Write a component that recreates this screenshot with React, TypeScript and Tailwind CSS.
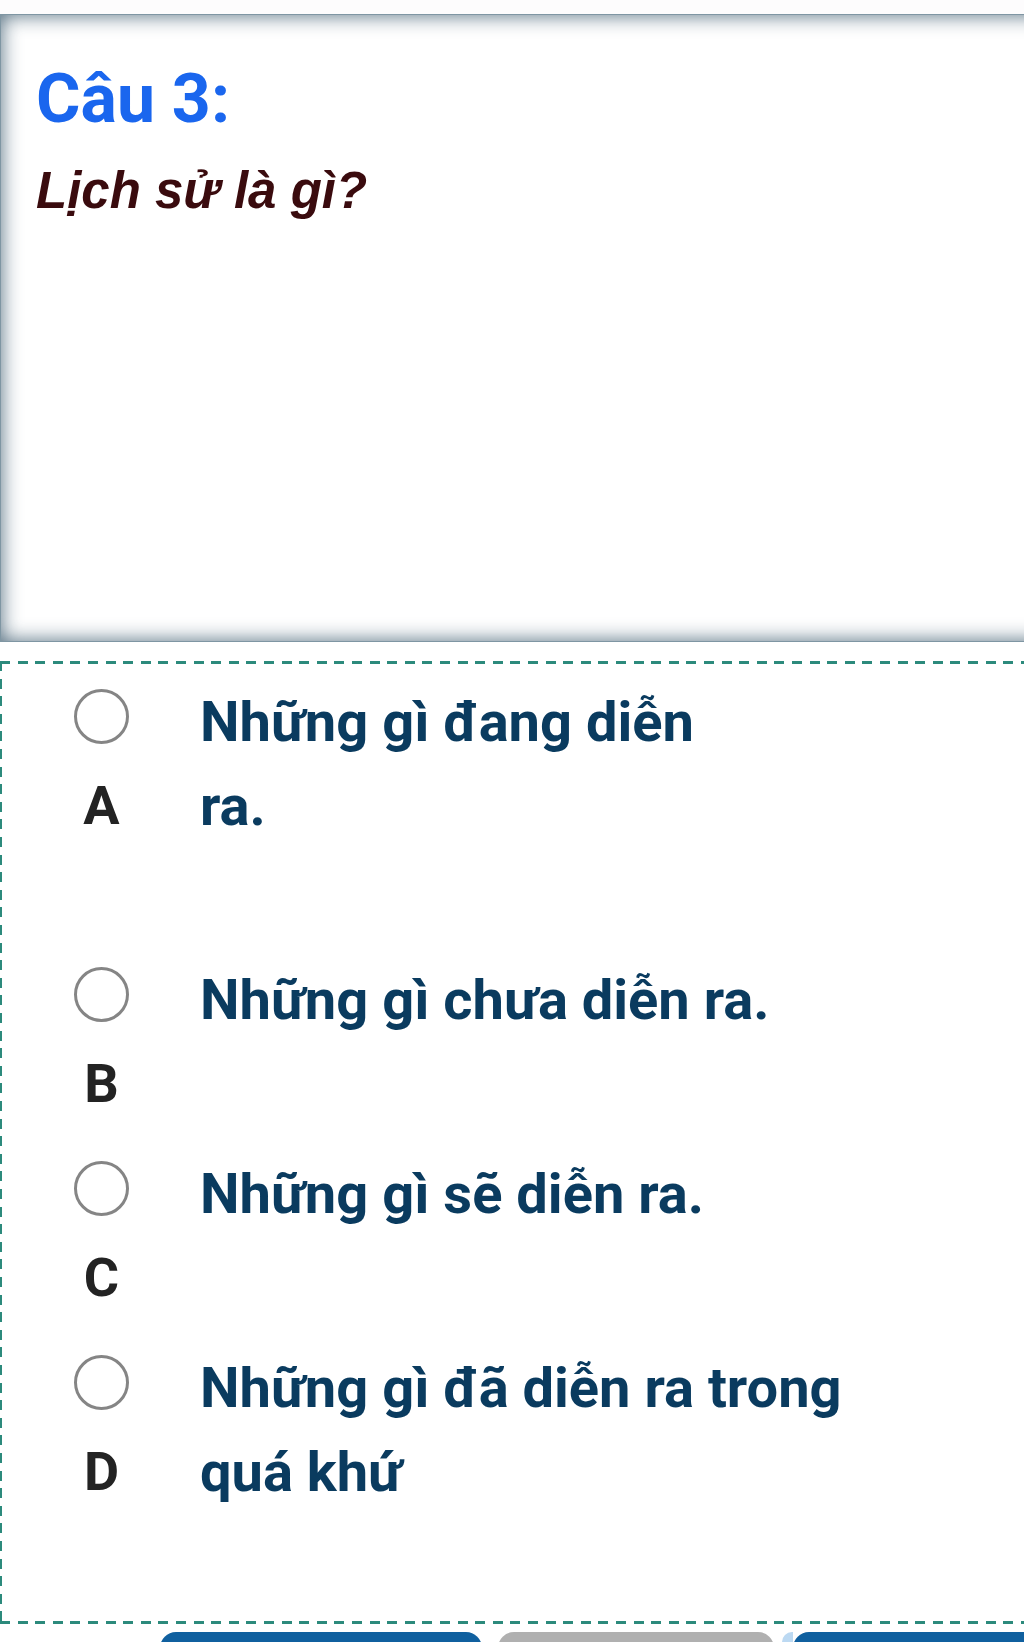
import React from "react";

const font = { fontFamily: "Roboto, 'Noto Sans', Arial, sans-serif" };

function Radio() {
  return (
    <div className="h-[84px] flex items-center justify-center pb-[12px]">
      <div className="w-[55px] h-[55px] rounded-full border-[3px] border-[#858585] bg-white" />
    </div>
  );
}

function Option({ letter, lines, extra }: { letter: string; lines: string[]; extra?: boolean }) {
  return (
    <div className="flex">
      <div className="w-[197px] flex flex-col">
        <Radio />
        <div className="h-[84px] leading-[84px] text-center text-[54px] font-bold text-[#232323]">{letter}</div>
      </div>
      <div className="flex flex-col text-[56px] font-bold leading-[84px] text-[#0a3b5f] whitespace-nowrap">
        {lines.map((l, i) => (
          <div key={i} className="h-[84px]">{l}</div>
        ))}
        {extra ? <div className="h-[84px]" /> : null}
      </div>
    </div>
  );
}

export default function App() {
  return (
    <div className="w-[1024px] h-[1642px] overflow-hidden bg-white relative" style={font}>
      <div className="h-[14px] bg-[#fdfcfd]" />
      <div className="w-[1100px] h-[628px] border border-[#7f96a3] bg-white shadow-[inset_0_0_20px_rgba(60,90,110,0.9)] pl-[35px] pt-[49px]">
        <div className="text-[68px] leading-[70px] font-bold text-[#1a66ee]">Câu 3:</div>
        <div className="mt-[32px] text-[51px] leading-[50px] font-bold italic text-[#3a0b0e] font-['Liberation_Sans',Arial,sans-serif]">Lịch sử là gì?</div>
      </div>
      <div className="h-[19px]" />
      <div className="w-[1100px] h-[963px] pt-[19px] pl-[3px] flex flex-col gap-[26px] bg-no-repeat bg-[image:repeating-linear-gradient(90deg,#2c8a7c_0_10px,transparent_10px_17.6px),repeating-linear-gradient(90deg,#2c8a7c_0_10px,transparent_10px_17.6px),repeating-linear-gradient(180deg,#2c8a7c_0_10px,transparent_10px_17.6px)] bg-[length:100%_3px,100%_3px,2px_100%] bg-[position:0_0,0_100%,0_0]">
        <Option letter="A" lines={["Những gì đang diễn", "ra."]} extra />
        <Option letter="B" lines={["Những gì chưa diễn ra."]} />
        <Option letter="C" lines={["Những gì sẽ diễn ra."]} />
        <Option letter="D" lines={["Những gì đã diễn ra trong", "quá khứ"]} />
      </div>
      <div className="flex mt-[8px] h-[20px]">
        <div className="ml-[160px] w-[322px] h-[20px] rounded-t-[16px] bg-[#10609f]" />
        <div className="ml-[16px] w-[276px] h-[20px] rounded-t-[16px] bg-[#b0b0b0]" />
        <div className="ml-[8px] w-[11px] h-[20px] bg-[#bcd9f2] rounded-tl-[10px]" />
        <div className="w-[231px] h-[20px] rounded-tl-[16px] bg-[#10609f]" />
      </div>
    </div>
  );
}
